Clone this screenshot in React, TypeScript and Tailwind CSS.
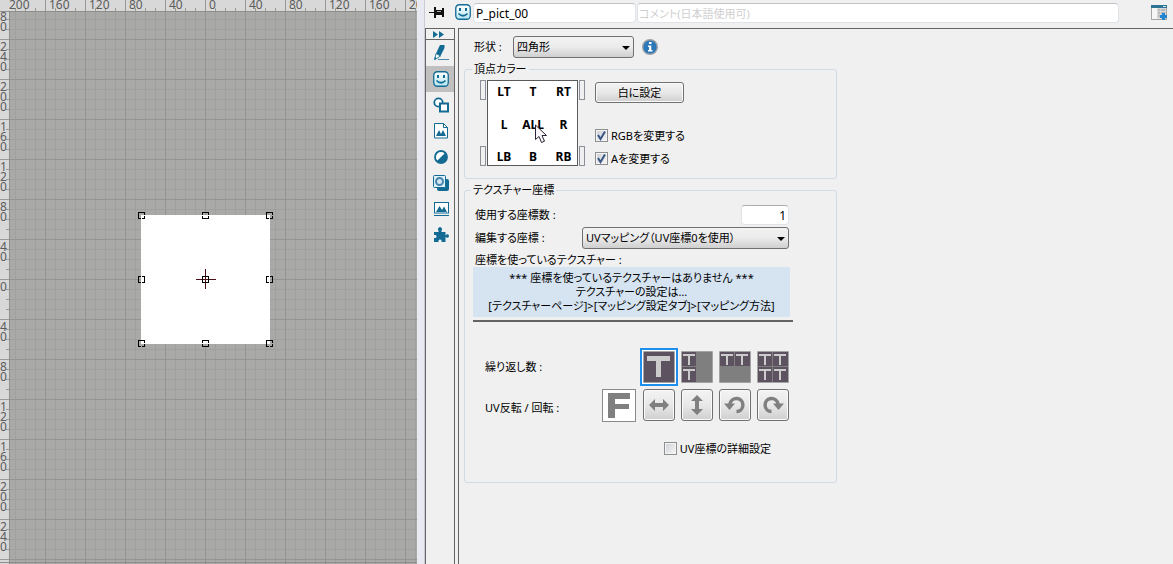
import React, { useState } from "react";

const TEAL = "#136b93";

const horizontalLabels = Array.from({ length: 11 }, (_, i) => ({
  x: 5 + i * 40,
  text: String(Math.abs(200 - i * 40)),
}));

const verticalLabels = Array.from({ length: 14 }, (_, i) => ({
  y: i * 40 - 1,
  text: String(Math.abs(280 - i * 40)),
}));

const verticalDigits = verticalLabels
  .flatMap((label) => label.text.split("").map((digit, i) => ({ digit, y: label.y + 12 + i * 10 })))
  .filter((item) => item.y > 12);

const handles = [
  [141, 215], [205, 215], [269, 215],
  [141, 279], [205, 279], [269, 279],
  [141, 343], [205, 343], [269, 343],
];

function handlePath(x: number, y: number) {
  const l = x - 3;
  const t = y - 3;
  if (x === 205 && y === 279) {
    return `M${l} ${t}h7v7h-7zM${l + 1} ${t + 1}v5h5v-5z`;
  }
  if (y === 279) {
    return `M${l} ${t}h3v1h-2v5h2v1h-3zM${l + 4} ${t}h3v7h-3v-1h2v-5h-2z`;
  }
  if (x === 205) {
    return `M${l} ${t}h7v3h-1v-2h-5v2h-1zM${l} ${t + 4}h1v2h5v-2h1v3h-7z`;
  }
  return `M${l} ${t}h7v3h-1v-2h-5v5h2v1h-3zM${l + 4} ${t + 6}h2v-2h1v3h-3z`;
}

function Viewport() {
  return (
    <section aria-label="viewport" className="h-full min-w-0 overflow-hidden bg-[#a9a9a7]">
      <svg width="100%" height="100%" className="block" shapeRendering="crispEdges">
        <defs>
          <pattern id="minor" x="5" y="9" width="10" height="10" patternUnits="userSpaceOnUse">
            <path d="M0 0h1v10H0zM1 0h9v1H1z" fill="#a0a09e" />
          </pattern>
          <pattern id="major" x="5" y="39" width="40" height="40" patternUnits="userSpaceOnUse">
            <path d="M0 0h1v40H0zM1 0h39v1H1z" fill="#949492" />
          </pattern>
          <pattern id="ticksX" x="5" y="0" width="40" height="11" patternUnits="userSpaceOnUse">
            <path d="M0 0h1v11H0zM10 8h1v3h-1zM20 8h1v3h-1zM30 8h1v3h-1z" fill="#999" />
          </pattern>
          <pattern id="ticksY" x="0" y="39" width="9" height="40" patternUnits="userSpaceOnUse">
            <path d="M0 0h9v1H0zM6 10h3v1H6zM6 20h3v1H6zM6 30h3v1H6z" fill="#999" />
          </pattern>
        </defs>
        <rect width="100%" height="100%" fill="url(#minor)" />
        <rect width="100%" height="100%" fill="url(#major)" />
        <rect x="0" y="12" width="9" height="100%" fill="#d8d8d8" />
        <rect x="0" y="12" width="9" height="100%" fill="url(#ticksY)" />
        <g fontFamily="Noto Sans, sans-serif" fontSize="12" fill="#5c5c5c">
          {verticalDigits.map((item) => (
            <text key={item.y} x="0" y={item.y}>
              {item.digit}
            </text>
          ))}
        </g>
        <rect width="100%" height="11" fill="#d8d8d8" />
        <rect width="100%" height="11" fill="url(#ticksX)" />
        <rect x="0" y="0" width="9" height="11" fill="#d8d8d8" />
        <g fontFamily="Noto Sans, sans-serif" fontSize="12" fill="#5c5c5c">
          {horizontalLabels.map((label) => (
            <text key={label.x} x={label.x + 4} y="9">
              {label.text}
            </text>
          ))}
        </g>
        <rect x="0" y="11" width="100%" height="1" fill="#8e8e8e" />
        <rect x="9" y="11" width="1" height="100%" fill="#8e8e8e" />
        <rect x="0" y="562" width="100%" height="1" fill="#8e8e8e" />
        <rect x="141" y="215" width="129" height="129" fill="#fff" />
        <path d="M196 279h20v1h-20zM205 269h1v20h-1z" fill="#4a1018" />
        {handles.map(([x, y]) => (
          <path key={`${x}-${y}`} d={handlePath(x, y)} fill="#000" fillRule="evenodd" />
        ))}
      </svg>
    </section>
  );
}

function Smiley() {
  return (
    <svg width="16" height="16" viewBox="0 0 16 16" className="shrink-0">
      <defs>
        <linearGradient id="face" x1="0" y1="0" x2="0" y2="1">
          <stop offset="0" stopColor="#fff" />
          <stop offset="1" stopColor="#b5e6f2" />
        </linearGradient>
      </defs>
      <rect x=".75" y=".75" width="14.5" height="14.5" rx="3.5" fill="url(#face)" stroke={TEAL} strokeWidth="1.3" />
      <path d="M4 4h2v3H4zM10 4h2v3h-2z" fill={TEAL} />
      <path d="M3.500 9.500q4.500 4.500 9 0" fill="none" stroke={TEAL} strokeWidth="1.700" />
    </svg>
  );
}

const svgProps = { width: 16, height: 16, viewBox: "0 0 16 16" };

const tools: { name: string; icon: React.ReactNode }[] = [
  {
    name: "描画",
    icon: (
      <svg {...svgProps}>
        <path d="M7 0h4.500v3L7.500 11 3 8.500z" fill={TEAL} />
        <path d="M3 8.500L7.500 11 1.800 14.500z" fill="#fff" stroke={TEAL} strokeWidth=".9" />
        <path d="M1 15l.7-3L4 13.500z" fill={TEAL} />
        <path d="M5 14h11v1H5z" fill="#4c88a5" />
      </svg>
    ),
  },
  { name: "形状", icon: <Smiley /> },
  {
    name: "図形",
    icon: (
      <svg {...svgProps}>
        <circle cx="5.500" cy="5.500" r="4.200" fill="#fff" stroke={TEAL} strokeWidth="1.800" />
        <rect x="7" y="6.500" width="8" height="8" fill="#fff" stroke={TEAL} strokeWidth="2" />
      </svg>
    ),
  },
  {
    name: "テクスチャー",
    icon: (
      <svg {...svgProps}>
        <path d="M1.500 .500h9L14.500 4.500v10.500h-13z" fill="#fff" stroke={TEAL} />
        <path d="M10.500 .500V4.500H14.500" fill="none" stroke={TEAL} />
        <path d="M3 13l3-6 2 4 2-4 3 6z" fill={TEAL} />
      </svg>
    ),
  },
  {
    name: "カラー",
    icon: (
      <svg {...svgProps}>
        <circle cx="8" cy="8" r="6" fill="#fff" stroke={TEAL} strokeWidth="1.800" />
        <path d="M3.700 12.300A6 6 0 0 0 12.300 3.700z" fill={TEAL} />
      </svg>
    ),
  },
  {
    name: "合成",
    icon: (
      <svg {...svgProps}>
        <rect x="4" y="4" width="12" height="12" rx="2" fill={TEAL} />
        <rect x=".5" y=".5" width="12" height="12" rx="1" fill="#dff1f7" stroke={TEAL} />
        <circle cx="6.500" cy="6.500" r="3.500" fill="#d4e6f2" stroke="#4584b0" strokeWidth="2" />
      </svg>
    ),
  },
  {
    name: "画像",
    icon: (
      <svg {...svgProps}>
        <rect x="1.500" y="1.500" width="14" height="10.500" fill="#fff" stroke={TEAL} />
        <path d="M3 11l3.500-6 2.500 4 2-3.500L14 11z" fill={TEAL} />
        <path d="M1 14h15v1H1z" fill={TEAL} />
      </svg>
    ),
  },
  {
    name: "プラグイン",
    icon: (
      <svg {...svgProps}>
        <path
          d="M1 5h4.500V3.500a2 2 0 1 1 3 0V5h4v3.200l1-.7a1.700 1.700 0 1 1 0 3l-1-.7V15H8.500v-1.500a1.700 1.700 0 0 0-3 0V15H1v-4h1.500a1.600 1.600 0 0 0 0-3H1z"
          fill={TEAL}
        />
      </svg>
    ),
  },
];

function Sidebar() {
  const [active, setActive] = useState("形状");
  return (
    <nav aria-label="ページ" className="w-[30px] shrink-0 border-x border-t border-[#646464]">
      <button aria-label="展開" className="flex h-[11px] w-full items-center justify-center border-b border-[#646464] pr-1">
        <svg width="11" height="7" viewBox="0 0 11 7">
          <path d="M0 0l5 3.500L0 7zM6 0l5 3.500L6 7z" fill={TEAL} />
        </svg>
      </button>
      {tools.map((tool) => (
        <button
          key={tool.name}
          aria-label={tool.name}
          onClick={() => setActive(tool.name)}
          className={`flex h-[26px] w-full items-center justify-center pl-0.5 ${active === tool.name ? "bg-[#c0c0c0]" : ""}`}
        >
          {tool.icon}
        </button>
      ))}
    </nav>
  );
}

function Dropdown({ id, options, className }: { id: string; options: string[]; className: string }) {
  return (
    <div className={`relative ${className}`}>
      <select
        id={id}
        className="block h-[22px] w-full appearance-none rounded-[3px] border border-[#707070] bg-linear-to-b from-[#f2f2f2] from-0% via-[#ebebeb] via-50% to-[#cfcfcf] pl-[3px] text-[11px] leading-5"
      >
        {options.map((option) => (
          <option key={option}>{option}</option>
        ))}
      </select>
      <svg width="8" height="4" viewBox="0 0 8 4" className="pointer-events-none absolute top-[10px] right-1">
        <path d="M0 0h8L4 4z" />
      </svg>
    </div>
  );
}

function Check({ label, checked = false }: { label: string; checked?: boolean }) {
  return (
    <label className="flex items-center gap-[3px] leading-[13px]">
      <span className="relative h-[13px] w-[13px]">
        <input
          type="checkbox"
          defaultChecked={checked}
          className="peer block h-[13px] w-[13px] appearance-none border border-[#8e8f8f] bg-linear-to-br from-[#cdd0d5] to-[#f7f7f7] inset-ring inset-ring-[#f4f4f4]"
        />
        <svg width="13" height="13" viewBox="0 0 13 13" className="pointer-events-none absolute inset-0 hidden peer-checked:block">
          <path d="M3 6l2.500 4L10 2.500" fill="none" stroke="#3a5784" strokeWidth="2" />
        </svg>
      </span>
      {label}
    </label>
  );
}

function Slots() {
  return (
    <div className="flex w-[6px] flex-col justify-between">
      <button aria-label="色" className="h-5 border border-[#8a8f98]" />
      <button aria-label="色" className="h-5 border border-[#8a8f98]" />
    </div>
  );
}

function VertexPicker() {
  const rows = [["LT", "T", "RT"], ["L", "ALL", "R"], ["LB", "B", "RB"]];
  return (
    <div className="relative flex gap-px">
      <Slots />
      <div className="grid h-[86px] w-[91px] grid-cols-[28px_30px_1fr] grid-rows-[21px_1fr_17px] border border-[#5a5a5a] bg-white font-['Noto_Sans','DejaVu_Sans',sans-serif] text-xs font-bold">
        {rows.flat().map((name) => (
          <button key={name} className="flex items-center justify-center pl-1">
            {name}
          </button>
        ))}
      </div>
      <Slots />
      <svg width="13" height="20" viewBox="0 0 13 20" className="pointer-events-none absolute top-[44px] left-[55px]">
        <path d="M.5 1v14.500l3.500-3 2.500 6 3-1.300-2.500-5.700h4.500z" fill="#f8f6fa" stroke="#2b2333" />
      </svg>
    </div>
  );
}

function Tee({ x, y, size }: { x: number; y: number; size: number }) {
  const big = size > 20;
  const t = big ? 5 : 2;
  const w = big ? 23 : 12;
  const left = x + Math.floor((size - w) / 2);
  const top = y + (big ? 4 : 2);
  const h = big ? 21 : 11;
  return (
    <>
      <rect x={x} y={y} width={size} height={size} fill="#5d5360" />
      <path d={`M${left} ${top}h${w}v${t}h${-(w - t) / 2}v${h - t}h${-t}v${-(h - t)}h${-(w - t) / 2}z`} fill="#ccc" />
    </>
  );
}

const tilings: { name: string; cells: number[][]; size: number }[] = [
  { name: "1×1", cells: [[1, 1]], size: 30 },
  { name: "1×2", cells: [[1, 1], [1, 16]], size: 15 },
  { name: "2×1", cells: [[1, 1], [16, 1]], size: 15 },
  { name: "2×2", cells: [[1, 1], [16, 1], [1, 16], [16, 16]], size: 15 },
];

function TilingButtons() {
  const [active, setActive] = useState("1×1");
  return (
    <div className="flex">
      {tilings.map((tiling) => (
        <button
          key={tiling.name}
          aria-label={tiling.name}
          onClick={() => setActive(tiling.name)}
          className={`border-2 p-px ${active === tiling.name ? "border-[#1e8fef] bg-white" : "border-transparent"}`}
        >
          <svg width="32" height="32" viewBox="0 0 32 32" className="block">
            <rect width="32" height="32" rx="1" fill="#a4a4a4" />
            <rect x="1" y="1" width="30" height="30" fill="#7f7f7f" />
            {tiling.cells.map(([x, y]) => (
              <Tee key={`${x}-${y}`} x={x} y={y} size={tiling.size} />
            ))}
            {tiling.size < 20 && <path d="M15.500 1v30M1 15.500h30" stroke="#7f7f7f" />}
          </svg>
        </button>
      ))}
    </div>
  );
}

const transforms: { name: string; icon: React.ReactNode }[] = [
  { name: "左右反転", icon: <path d="M0 10l6-6v4h8V4l6 6-6 6v-4H6v4z" fill="#808080" /> },
  { name: "上下反転", icon: <path d="M10 0l6 6h-4v8h4l-6 6-6-6h4V6H4z" fill="#808080" /> },
  {
    name: "左回転",
    icon: (
      <>
        <path d="M5 10.500V9a6.500 6.500 0 1 1 6.500 7.500" fill="none" stroke="#808080" strokeWidth="3.500" />
        <path d="M-1 8.500h11l-5.500 6.500z" fill="#808080" />
      </>
    ),
  },
  {
    name: "右回転",
    icon: (
      <>
        <path d="M15 10.500V9a6.500 6.500 0 1 0-6.500 7.500" fill="none" stroke="#808080" strokeWidth="3.500" />
        <path d="M21 8.500H10l5.500 6.500z" fill="#808080" />
      </>
    ),
  },
];

function TransformButtons() {
  return (
    <div className="flex items-start gap-[6px]">
      <svg width="34" height="33" viewBox="0 0 34 33" className="mr-px block">
        <rect x=".5" y=".5" width="33" height="32" fill="#fff" stroke="#8a8a8a" />
        <path d="M6 4h22v6H13v5h14v5H13v9H6z" fill="#808080" />
      </svg>
      {transforms.map((item) => (
        <button
          key={item.name}
          aria-label={item.name}
          className="flex h-8 w-8 items-center justify-center rounded-[3px] border border-[#707070] bg-linear-to-b from-[#f3f3f3] from-0% via-[#e8e8e8] via-50% to-[#cfcfcf] inset-ring inset-ring-[#fafafa]"
        >
          <svg width="22" height="20" viewBox="-1 0 22 20">
            {item.icon}
          </svg>
        </button>
      ))}
    </div>
  );
}

const groupClass =
  "ml-[5px] w-full min-w-0 max-w-[373px] rounded-[3px] border border-[#d0dbe4] inset-ring inset-ring-transparent";

function Properties() {
  return (
    <main className="min-w-0 flex-1 border-t border-l border-[#646464] pt-[7px]">
      <div className="flex items-center pl-[15px]">
        <label htmlFor="shape" className="w-[39px]">形状 :</label>
        <Dropdown id="shape" options={["四角形"]} className="w-[121px]" />
        <button aria-label="情報" className="ml-2">
          <svg width="16" height="16" viewBox="0 0 16 16" className="block">
            <circle cx="8" cy="8" r="7.300" fill="#2c78b8" stroke="#9aa0a6" strokeWidth="1.400" />
            <path d="M7 3h2.500v2H7zM6 6.500h3.300V11H10.500v1.500H6V11h1V8H6z" fill="#fff" />
          </svg>
        </button>
      </div>

      <fieldset className={`${groupClass} mt-1 pt-1 pb-3 pl-[15px]`}>
        <legend className="-ml-2 px-0.5 leading-[14px]">頂点カラー</legend>
        <div className="flex gap-[10px]">
          <VertexPicker />
          <div className="flex flex-col items-start">
            <button className="mt-0.5 h-[21px] w-[89px] rounded-[3px] border border-[#707070] bg-linear-to-b from-[#f3f3f3] from-0% via-[#e8e8e8] via-50% to-[#cfcfcf] leading-[18px] inset-ring inset-ring-[#fafafa]">
              白に設定
            </button>
            <div className="mt-[26px] flex flex-col gap-[10px]">
              <Check label="RGBを変更する" checked />
              <Check label="Aを変更する" checked />
            </div>
          </div>
        </div>
      </fieldset>

      <fieldset className={`${groupClass} mt-1 pt-2 pb-[27px] pl-2`}>
        <legend className="-ml-0.5 px-0.5 leading-[14px]">テクスチャー座標</legend>
        <div className="max-w-[320px]">
          <div className="pr-1 pl-0.5">
            <div className="flex items-center justify-between">
              <label htmlFor="count">使用する座標数 :</label>
              <input
                id="count"
                defaultValue="1"
                className="h-5 w-12 rounded-sm border border-[#dfe3e8] border-t-[#abadb3] bg-white pr-0.5 text-right text-xs"
              />
            </div>
            <div className="mt-0.5 flex items-center justify-between">
              <label htmlFor="coord">編集する座標 :</label>
              <Dropdown id="coord" options={["UVマッピング（UV座標0を使用）"]} className="w-[207px]" />
            </div>
            <p className="mt-1 leading-[14px]">座標を使っているテクスチャー :</p>
          </div>
          <div className="mr-[3px] bg-[#d6e4f2] pt-1 pb-1 text-center leading-[14px]">
            <p>*** 座標を使っているテクスチャーはありません ***</p>
            <p>テクスチャーの設定は…</p>
            <p>[テクスチャーページ]&gt;[マッピング設定タブ]&gt;[マッピング方法]</p>
          </div>
          <hr className="mt-[3px] border-t-2 border-[#646464]" />
          <div className="mt-[26px] flex items-center justify-between pr-px pl-3">
            <span>繰り返し数 :</span>
            <TilingButtons />
          </div>
          <div className="mt-[3px] flex items-center justify-between pr-1 pl-3">
            <span className="pt-1.5">UV反転 / 回転 :</span>
            <TransformButtons />
          </div>
          <div className="mt-5 flex justify-end pr-[22px]">
            <Check label="UV座標の詳細設定" />
          </div>
        </div>
      </fieldset>
    </main>
  );
}

function TitleBar() {
  return (
    <header className="flex h-7 shrink-0 items-start pt-[3px]">
      <button aria-label="固定" className="mt-1 ml-1">
        <svg width="16" height="11" viewBox="0 0 16 11" className="block">
          <path d="M0 5h6v1H0zM5 0h2v11H5zM7 3h6v5H7zM13 1h2v9h-2z" fill="#111" />
          <path d="M8 4h4v1H8z" fill="#aaa" />
        </svg>
      </button>
      <span className="mt-px ml-[10px]">
        <Smiley />
      </span>
      <input
        aria-label="名前"
        defaultValue="P_pict_00"
        className="ml-0.5 h-5 w-[163px] rounded-sm border border-[#dfe3e8] border-t-[#c0c4c9] bg-white px-0.5 text-xs"
      />
      <input
        aria-label="コメント"
        placeholder="コメント(日本語使用可)"
        className="ml-px h-5 min-w-0 flex-1 rounded-sm border border-[#dfe3e8] border-t-[#c0c4c9] bg-white px-px text-[11px] placeholder:text-[#cfcfcf]"
      />
      <button aria-label="一覧に追加" className="mt-0.5 mr-[6px] ml-8">
        <svg width="16" height="15" viewBox="0 0 16 15" className="block">
          <path d="M0 0h16v15H0z" fill="#a5a5a5" />
          <path d="M1 3h5v11H1z" fill="#f5f5f5" />
          <path d="M6 3h9v11H6z" fill="#d8d8d8" />
          <path d="M0 0h16v3H0z" fill="#2c7396" />
          <path d="M12 1h3v1h-3z" fill="#d5e5ee" />
          <path d="M7 5h2M10 5h4M7 8h2M10 8h4M7 11h2" stroke="#999" />
          <path d="M11 8h3v2h2v3h-2v2h-3v-2H9v-3h2z" fill="#2384cf" />
        </svg>
      </button>
    </header>
  );
}

export default function App() {
  return (
    <div className="grid h-screen grid-cols-[417fr_8px_748fr] overflow-hidden bg-[#f0f0f0] font-['Noto_Sans','Noto_Sans_CJK_JP',sans-serif] text-[11px] text-black [font-feature-settings:'palt']">
      <Viewport />
      <div className="border-r border-[#c9c9d8] bg-[#e9e9f1]" />
      <div className="flex min-w-0 flex-col">
        <TitleBar />
        <div className="flex min-h-0 flex-1 gap-[3px]">
          <Sidebar />
          <Properties />
        </div>
      </div>
    </div>
  );
}
